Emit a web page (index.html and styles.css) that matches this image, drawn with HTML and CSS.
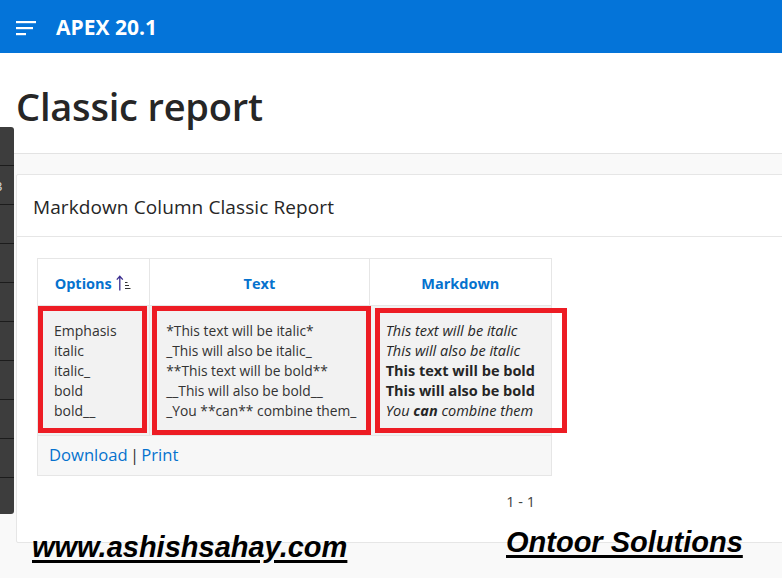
FILE: index.html
```html
<!DOCTYPE html>
<html>
<head>
<meta charset="utf-8">
<link rel="stylesheet" href="styles.css">
</head>
<body>
<header class="topbar">
  <svg class="menu-icon" width="22" height="16" viewBox="0 0 22 16">
    <rect x="0" y="1" width="20" height="2.2" fill="#fff"/>
    <rect x="0" y="7" width="17" height="2.2" fill="#fff"/>
    <rect x="0" y="13" width="10" height="2.2" fill="#fff"/>
  </svg>
  <span class="app-name">APEX 20.1</span>
</header>
<section class="title-bar">
  <h1>Classic report</h1>
</section>
<main class="body">
  <div class="region">
    <div class="region-header">Markdown Column Classic Report</div>
    <div class="region-body">
      <div class="report">
        <table class="report-table">
          <thead>
            <tr>
              <th class="col-options">Options <svg class="sort-icon" width="15" height="16" viewBox="0 0 15 16"><path d="M3.8 15.5V1.2M0.8 4.6L3.8 1.2L6.8 4.6" fill="none" stroke="#3b2d8f" stroke-width="1.3"/><path d="M9 7.5h2.5M9 10.5h4M9 13.5h5.5" stroke="#333" stroke-width="1.1"/></svg></th>
              <th class="col-text">Text</th>
              <th class="col-md">Markdown</th>
            </tr>
          </thead>
          <tbody>
            <tr>
              <td>Emphasis<br>italic<br>italic_<br>bold<br>bold__</td>
              <td class="src-cell">*This text will be italic*<br>_This will also be italic_<br>**This text will be bold**<br>__This will also be bold__<br>_You **can** combine them_</td>
              <td class="md-cell"><em>This text will be italic</em><br><em>This will also be italic</em><br><strong>This text will be bold</strong><br><strong>This will also be bold</strong><br><em>You <strong>can</strong> combine them</em></td>
            </tr>
          </tbody>
          <tfoot>
            <tr>
              <td colspan="3" class="report-links"><a>Download</a> | <a>Print</a></td>
            </tr>
          </tfoot>
        </table>
        <span class="mark mark-1"></span>
        <span class="mark mark-2"></span>
        <span class="mark mark-3"></span>
      </div>
      <div class="pagination">1 - 1</div>
    </div>
  </div>
</main>
<div class="dev-bar">
  <div class="dev-cell"><span class="dev-glyph">3</span></div>
  <div class="dev-cell"></div>
  <div class="dev-cell"></div>
  <div class="dev-cell"></div>
  <div class="dev-cell"></div>
  <div class="dev-cell"></div>
  <div class="dev-cell"></div>
  <div class="dev-cell"></div>
  <div class="dev-cell"></div>
  <div class="dev-cell last"></div>
</div>
<div class="watermark wm-left">www.ashishsahay.com</div>
<div class="watermark wm-right">Ontoor Solutions</div>
</body>
</html>
```

FILE: styles.css
```css
html, body {
  margin: 0;
  padding: 0;
  overflow: hidden;
  height: 100%;
}
body {
  font-family: "Open Sans", "Noto Sans", sans-serif;
  color: #262626;
  background: #f9f9f9;
  position: relative;
}
.topbar {
  height: 53px;
  background: #0474d9;
  display: flex;
  align-items: center;
  padding-left: 16px;
  box-sizing: border-box;
}
.menu-icon {
  margin-top: 2px;
}
.app-name {
  color: #fff;
  font-weight: 700;
  font-size: 21px;
  margin-left: 18px;
}
.title-bar {
  background: #fff;
  height: 101px;
  border-bottom: 1px solid #e3e3e3;
  box-sizing: border-box;
  padding: 27px 0 0 16px;
}
.title-bar h1 {
  margin: 0;
  font-size: 38px;
  font-weight: 600;
  line-height: 52px;
  color: #262626;
  letter-spacing: -0.2px;
}
.body {
  padding: 20px 0 0 16px;
}
.region {
  background: #fff;
  border: 1px solid #e6e6e6;
  margin-right: -30px;
  border-radius: 2px;
}
.region-header {
  height: 61px;
  border-bottom: 1px solid #e6e6e6;
  padding-left: 16px;
  font-size: 19px;
  line-height: 64px;
  color: #262626;
  letter-spacing: 0.1px;
}
.region-body {
  padding: 21px 20px 30px 20px;
}
.report {
  position: relative;
  width: 515px;
}
.report-table {
  width: 515px;
  border-collapse: collapse;
  border: 1px solid #e6e6e6;
  font-size: 14px;
}
.report-table th {
  height: 47px;
  color: #0572ce;
  font-weight: 700;
  font-size: 14.5px;
  text-align: center;
  border-right: 1px solid #e6e6e6;
  border-bottom: 1px solid #e6e6e6;
  background: #fff;
  padding: 3px 0 0 0;
  vertical-align: middle;
  box-sizing: border-box;
}
.report-table th.col-options {
  padding-right: 2px;
}
.col-options { width: 112px; }
.col-text { width: 219px; }
.col-md { width: 182px; }
.sort-icon {
  vertical-align: -2px;
}
.report-table tbody td {
  background: #f2f2f2;
  vertical-align: top;
  line-height: 20px;
  padding: 15px 8px 14px 16px;
  border-right: 1px solid #e6e6e6;
  border-bottom: 1px solid #e6e6e6;
  white-space: nowrap;
  color: #333;
}
.report-table tbody td.src-cell {
  font-size: 13.8px;
}
.report-table tbody td.md-cell {
  font-size: 14.5px;
}
.report-table tbody td em,
.report-table tbody td strong {
  color: #262626;
}
.report-links {
  background: #f7f7f7;
  height: 40px;
  box-sizing: border-box;
  padding: 0 0 2px 11px;
  font-size: 16.6px;
  color: #333;
  vertical-align: middle;
  word-spacing: -2px;
}
.report-links a {
  color: #0572ce;
  word-spacing: 0;
}
.mark {
  position: absolute;
  border: 5px solid #ed1c24;
  box-sizing: border-box;
}
.mark-1 { left: 1px; top: 48px; width: 109px; height: 127px; }
.mark-2 { left: 115px; top: 48px; width: 219px; height: 129px; }
.mark-3 { left: 338px; top: 50px; width: 192px; height: 125px; }
.pagination {
  width: 515px;
  box-sizing: border-box;
  padding: 16px 17px 0 0;
  text-align: right;
  font-size: 14.5px;
  line-height: 20px;
  color: #404040;
}
.dev-bar {
  position: absolute;
  left: 0;
  top: 127px;
  width: 14px;
  height: 387px;
  background: #3d3d3d;
  border-radius: 0 3px 3px 0;
  overflow: hidden;
}
.dev-cell {
  height: 38px;
  border-bottom: 1px solid #1c1c1c;
  position: relative;
}
.dev-cell.last { border-bottom: none; }
.dev-glyph {
  position: absolute;
  left: -5px;
  top: 52px;
  color: #ddd;
  font-size: 13px;
  line-height: 14px;
}
.watermark {
  position: absolute;
  font-family: "Liberation Sans", Arial, sans-serif;
  font-weight: 700;
  font-style: italic;
  font-size: 29px;
  color: #000;
  text-decoration: underline;
  text-decoration-thickness: 3px;
  text-underline-offset: 3px;
  line-height: 34px;
}
.wm-left { left: 32px; top: 530px; }
.wm-right { left: 506px; top: 525px; }
```
